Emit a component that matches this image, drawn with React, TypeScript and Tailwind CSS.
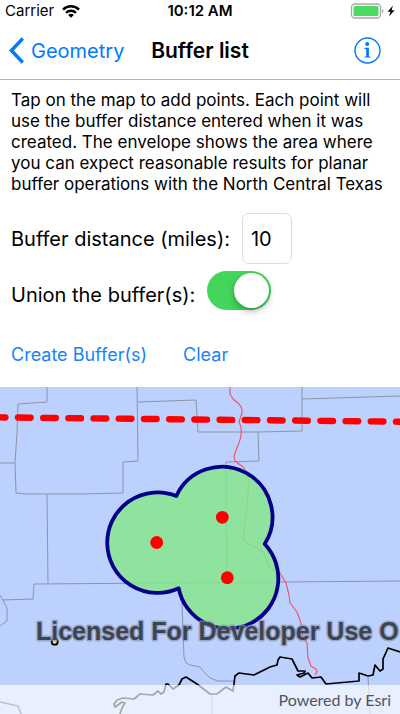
import React, { useState } from "react";

function StatusBar() {
  return (
    <div className="grid h-[22px] grid-cols-[1fr_auto_1fr] items-center px-[5px] text-[15px] leading-[22px]">
      <div className="flex items-center gap-2">
        <span>Carrier</span>
        <svg width="18" height="13" viewBox="0 0 18 13" fill="none" stroke="#000" strokeWidth="2.4" aria-hidden="true">
          <path d="M1 4.6a11.4 11.4 0 0 1 16 0" />
          <path d="M4 7.8a7.2 7.2 0 0 1 10 0" />
          <path d="M9 12.8 6.2 10a4 4 0 0 1 5.6 0z" fill="#000" stroke="none" />
        </svg>
      </div>
      <span className="font-semibold">10:12 AM</span>
      <svg className="justify-self-end" width="46" height="16" viewBox="0 0 46 16" aria-hidden="true">
        <rect x="2.5" y="1" width="29" height="14" rx="3.5" fill="#fff" stroke="#a6a6a6" strokeWidth="1.3" />
        <rect x="4.5" y="3" width="25" height="10" rx="1.5" fill="#4cd964" />
        <path d="M33 5.5a3 3 0 0 1 0 5z" fill="#a6a6a6" />
        <path d="M44 2.5 38.5 8.800h3L40 13.5l5.5-6.3h-3z" fill="#000" />
      </svg>
    </div>
  );
}

function NavBar() {
  return (
    <header className="grid h-[58px] grid-cols-[1fr_auto_1fr] items-center border-b border-[#b2b2b2] px-[9px]">
      <button type="button" className="flex items-center gap-[7px] text-[20px] text-[#007aff]">
        <svg width="15" height="27" viewBox="0 0 15 27" fill="none" stroke="currentColor" strokeWidth="3.4" aria-hidden="true">
          <path d="M13.8 1.5 2.4 13.5l11.4 12" />
        </svg>
        Geometry
      </button>
      <h1 className="text-[21px] font-semibold">Buffer list</h1>
      <button type="button" aria-label="Information" className="mr-[10px] justify-self-end text-[#007aff]">
        <svg width="27" height="27" viewBox="0 0 27 27" fill="none" aria-hidden="true">
          <circle cx="13.5" cy="13.5" r="12.5" stroke="currentColor" strokeWidth="1.4" />
          <circle cx="13.2" cy="7" r="2" fill="currentColor" />
          <path d="M10.500 10.800h4.400v8.600h1.600v1.200h-6v-1.200h1.700v-7.400h-1.700z" fill="currentColor" />
        </svg>
      </button>
    </header>
  );
}

function BufferMap() {
  return (
    <section aria-label="Map" className="relative overflow-hidden bg-[#bdd1ff]">
      <svg className="block w-full" viewBox="0 0 400 327" fill="none" strokeLinejoin="round" aria-hidden="true">
        <g stroke="#8d94a6" strokeWidth="1">
          <path d="M47 0V15L18 17 17 45 15 76 16 106 25 107 82 107 123 106V75L138 74 137 0" />
          <path d="M0 76H15M138 15 196 13 198 45 258 45 302 44V0M302 12 367 10 400 9" />
          <path d="M258 45 259 74 226 75 227 196M47 107 48 196M3 213 33 212 34 197 167 196 400 194" />
          <path d="M0 208 7 221V234L0 239M167 196 173 197 179 201 182 216 184 270 186 276 190 278 200 280 203 284 210 291 218 294H235" />
          <path d="M0 315 18 319 21 327" stroke="#4c5260" strokeWidth="1.6" />
          <path d="M212 307V327M368 290 370 327" />
        </g>
        <path
          d="M230 0V7L233 12 239 17Q244 22 241 29L239 35 241 40Q242 50 238 58L234 69 235 74 243 80Q248 86 249 96L246 126 243 152 247 156 263 165 267 173 269 180 275 184 280 186 286 196 289 208 290 216 297 225 301 236 303 250 307 256 308 271 311 279 316 282 317 285 315 288"
          stroke="#ef5064"
          strokeWidth="1.1"
        />
        <path
          d="M120 327 122 321 125 316 122 315 115 320 114 317 117 313 123 311 134 312 140 307 153 308 158 304 161 307 164 305 166 297H168L173 302 179 298 182 292 186 290 197 297 210 307H217L226 300 233 304 234 297 235 289 239 286 254 288 270 280 277 278 278 273 280 270 292 272 298 284H305L304 286 297 288 300 290 308 286 312 291 321 290 326 297 359 294V286L368 289 373 288 375 278 380 284 383 282V272L388 261 400 265"
          stroke="#000"
          strokeWidth="1.7"
        />
        <path d="M-7.2 30.3 400 34.7" stroke="#f00" strokeWidth="6.4" strokeLinecap="round" strokeDasharray="12.6 12.6" />
        <path
          d="M176.3 109A50.4 50.4 0 1 1 264.7 157 50.3 50.3 0 1 1 178.7 201.3 50.3 50.3 0 1 1 176.3 109Z"
          fill="#88e58e"
          fillOpacity="0.85"
          stroke="#00008b"
          strokeWidth="3.8"
        />
        <g fill="#f00">
          <circle cx="156.7" cy="155.5" r="6.4" />
          <circle cx="222.3" cy="130.3" r="6.4" />
          <circle cx="227.3" cy="190.7" r="6.4" />
        </g>
        <circle cx="54.7" cy="254.7" r="3" fill="#f4ee6a" stroke="#000" strokeWidth="1.8" />
        <text
          x="36"
          y="253"
          fontFamily="Liberation Sans, Arial, sans-serif"
          fontWeight="700"
          fontSize="25"
          fill="#3c4454"
          stroke="#8c93a8"
          strokeOpacity="0.7"
          strokeWidth="3"
          paintOrder="stroke"
        >
          Licensed For Developer Use O
        </text>
      </svg>
      <p className="absolute inset-x-0 bottom-0 bg-white/65 pr-[9px] text-right font-['Lato',sans-serif] text-[16px] leading-[29px] text-[#50545c]">
        Powered by Esri
      </p>
    </section>
  );
}

export default function App() {
  const [distance, setDistance] = useState("10");
  const [union, setUnion] = useState(true);
  return (
    <main className="bg-white font-['Inter','Liberation_Sans',sans-serif] text-black">
      <StatusBar />
      <NavBar />
      <div className="flex flex-col pt-[10px] pl-[11px]">
        <p className="text-[17px] leading-[21px]">
          Tap on the map to add points. Each point will
          <br />
          use the buffer distance entered when it was
          <br />
          created. The envelope shows the area where
          <br />
          you can expect reasonable results for planar
          <br />
          buffer operations with the North Central Texas
        </p>
        <div className="mt-[18px] flex items-center gap-3 text-[20px]">
          <label htmlFor="distance">Buffer distance (miles):</label>
          <input
            id="distance"
            inputMode="numeric"
            value={distance}
            onChange={(e) => setDistance(e.target.value)}
            className="h-[51px] w-[50px] rounded-[7px] border border-[#dedede] px-2"
          />
        </div>
        <div className="mt-[7px] flex items-start gap-3 text-[20px]">
          <label htmlFor="union" className="mt-[9px]">
            Union the buffer(s):
          </label>
          <span className="relative h-[39px] w-16">
            <input
              id="union"
              type="checkbox"
              role="switch"
              checked={union}
              onChange={(e) => setUnion(e.target.checked)}
              className="peer block h-[39px] w-16 appearance-none rounded-full bg-[#e5e5ea] checked:bg-[#43d65c]"
            />
            <span className="pointer-events-none absolute top-0.5 left-0.5 size-[35px] rounded-full bg-white shadow-[0_3px_7px_rgba(0,0,0,0.3)] peer-checked:left-[27px]" />
          </span>
        </div>
        <div className="mt-[29px] mb-4 flex gap-9 text-[18px] leading-8 text-[#1484ff]">
          <button type="button">Create Buffer(s)</button>
          <button type="button">Clear</button>
        </div>
      </div>
      <BufferMap />
    </main>
  );
}
